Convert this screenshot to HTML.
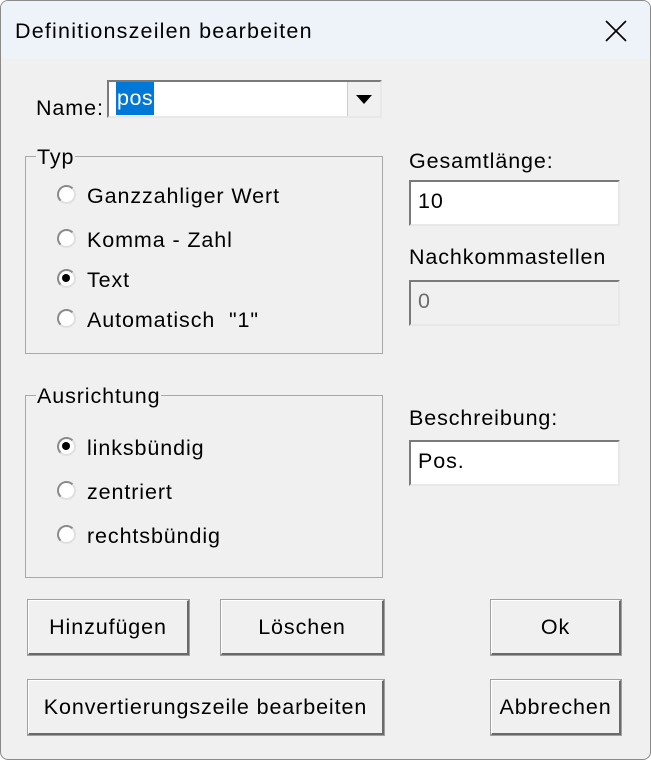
<!DOCTYPE html>
<html><head><meta charset="utf-8"><style>
*{margin:0;padding:0;box-sizing:border-box}
body{width:651px;height:760px;background:#fff;font-family:"Liberation Sans",sans-serif;font-size:21.5px;letter-spacing:0.9px;color:#000;position:relative;overflow:hidden}
.win{position:absolute;left:0;top:0;width:651px;height:760px;background:#f0f0f0;border:1px solid #8a8a8a;border-radius:8px;overflow:hidden}
.title{position:absolute;left:0;top:0;width:651px;height:58px;background:#eef3fa}
.a{position:absolute;white-space:nowrap}
.grp{position:absolute;border:1px solid #a8a8a8}
.glab{position:absolute;background:#f0f0f0;padding:0 1px}
.radio{position:absolute;width:19px;height:19px;border-radius:50%;background:#fff;border:2.5px solid #8a8a8a;border-right-color:#e0e0e0;border-bottom-color:#e0e0e0}
.radio.on::after{content:"";position:absolute;left:3px;top:3px;width:8px;height:8px;border-radius:50%;background:#000}
.inp{position:absolute;background:#fff;border:2px solid #7a7a7a;border-right-color:#e8e8e8;border-bottom-color:#e8e8e8}
.btn{position:absolute;background:#f0f0f0;border:1px solid #fff;border-right:2px solid #6a6a6a;border-bottom:2px solid #6a6a6a;outline:1px solid #a0a0a0;text-align:center;display:flex;align-items:center;justify-content:center}
</style></head><body><div class="win">
<div class="title"></div>
<div class="a" style="left:14px;top:18px;letter-spacing:1.2px">Definitionszeilen bearbeiten</div>
<svg class="a" style="left:604px;top:19px" width="22" height="22"><path d="M1 1L21 21M21 1L1 21" stroke="#000" stroke-width="1.6"/></svg>

<div class="a" style="left:35px;top:95px">Name:</div>
<div class="inp" style="left:106px;top:79px;width:275px;height:38px"></div>
<div class="a" style="left:115px;top:81px;width:38px;height:33px;background:#0078d7;color:#fff;line-height:33px;padding-left:1px;letter-spacing:0.5px">pos</div>
<div class="a" style="left:346px;top:81px;width:33px;height:34px;background:#f0f0f0;border-left:1px solid #ccc"></div>
<svg class="a" style="left:355px;top:94px" width="16" height="9"><path d="M0 0H16L8 9Z" fill="#000"/></svg>

<div class="grp" style="left:24px;top:155px;width:358px;height:198px"></div>
<div class="glab a" style="left:35px;top:144px">Typ</div>
<div class="radio" style="left:56px;top:184px"></div><div class="a" style="left:86px;top:183px">Ganzzahliger Wert</div>
<div class="radio" style="left:56px;top:228px"></div><div class="a" style="left:86px;top:227px">Komma - Zahl</div>
<div class="radio on" style="left:56px;top:268px"></div><div class="a" style="left:86px;top:267px">Text</div>
<div class="radio" style="left:56px;top:308px"></div><div class="a" style="left:86px;top:307px">Automatisch &nbsp;"1"</div>

<div class="grp" style="left:24px;top:394px;width:358px;height:183px"></div>
<div class="glab a" style="left:35px;top:383px">Ausrichtung</div>
<div class="radio on" style="left:56px;top:436px"></div><div class="a" style="left:86px;top:435px">linksbündig</div>
<div class="radio" style="left:56px;top:480px"></div><div class="a" style="left:86px;top:479px">zentriert</div>
<div class="radio" style="left:56px;top:524px"></div><div class="a" style="left:86px;top:523px">rechtsbündig</div>

<div class="a" style="left:408px;top:148px">Gesamtlänge:</div>
<div class="inp" style="left:408px;top:179px;width:211px;height:46px"></div>
<div class="a" style="left:417px;top:188px">10</div>
<div class="a" style="left:408px;top:244px">Nachkommastellen</div>
<div class="inp" style="left:408px;top:279px;width:211px;height:46px;background:#f0f0f0"></div>
<div class="a" style="left:417px;top:288px;color:#6d6d6d">0</div>
<div class="a" style="left:408px;top:405px">Beschreibung:</div>
<div class="inp" style="left:408px;top:439px;width:211px;height:46px"></div>
<div class="a" style="left:417px;top:448px">Pos.</div>

<div class="btn" style="left:27px;top:599px;width:161px;height:55px">Hinzufügen</div>
<div class="btn" style="left:220px;top:599px;width:163px;height:55px">Löschen</div>
<div class="btn" style="left:490px;top:599px;width:130px;height:55px">Ok</div>
<div class="btn" style="left:27px;top:679px;width:356px;height:55px">Konvertierungszeile bearbeiten</div>
<div class="btn" style="left:490px;top:679px;width:130px;height:55px">Abbrechen</div>
</div></body></html>
